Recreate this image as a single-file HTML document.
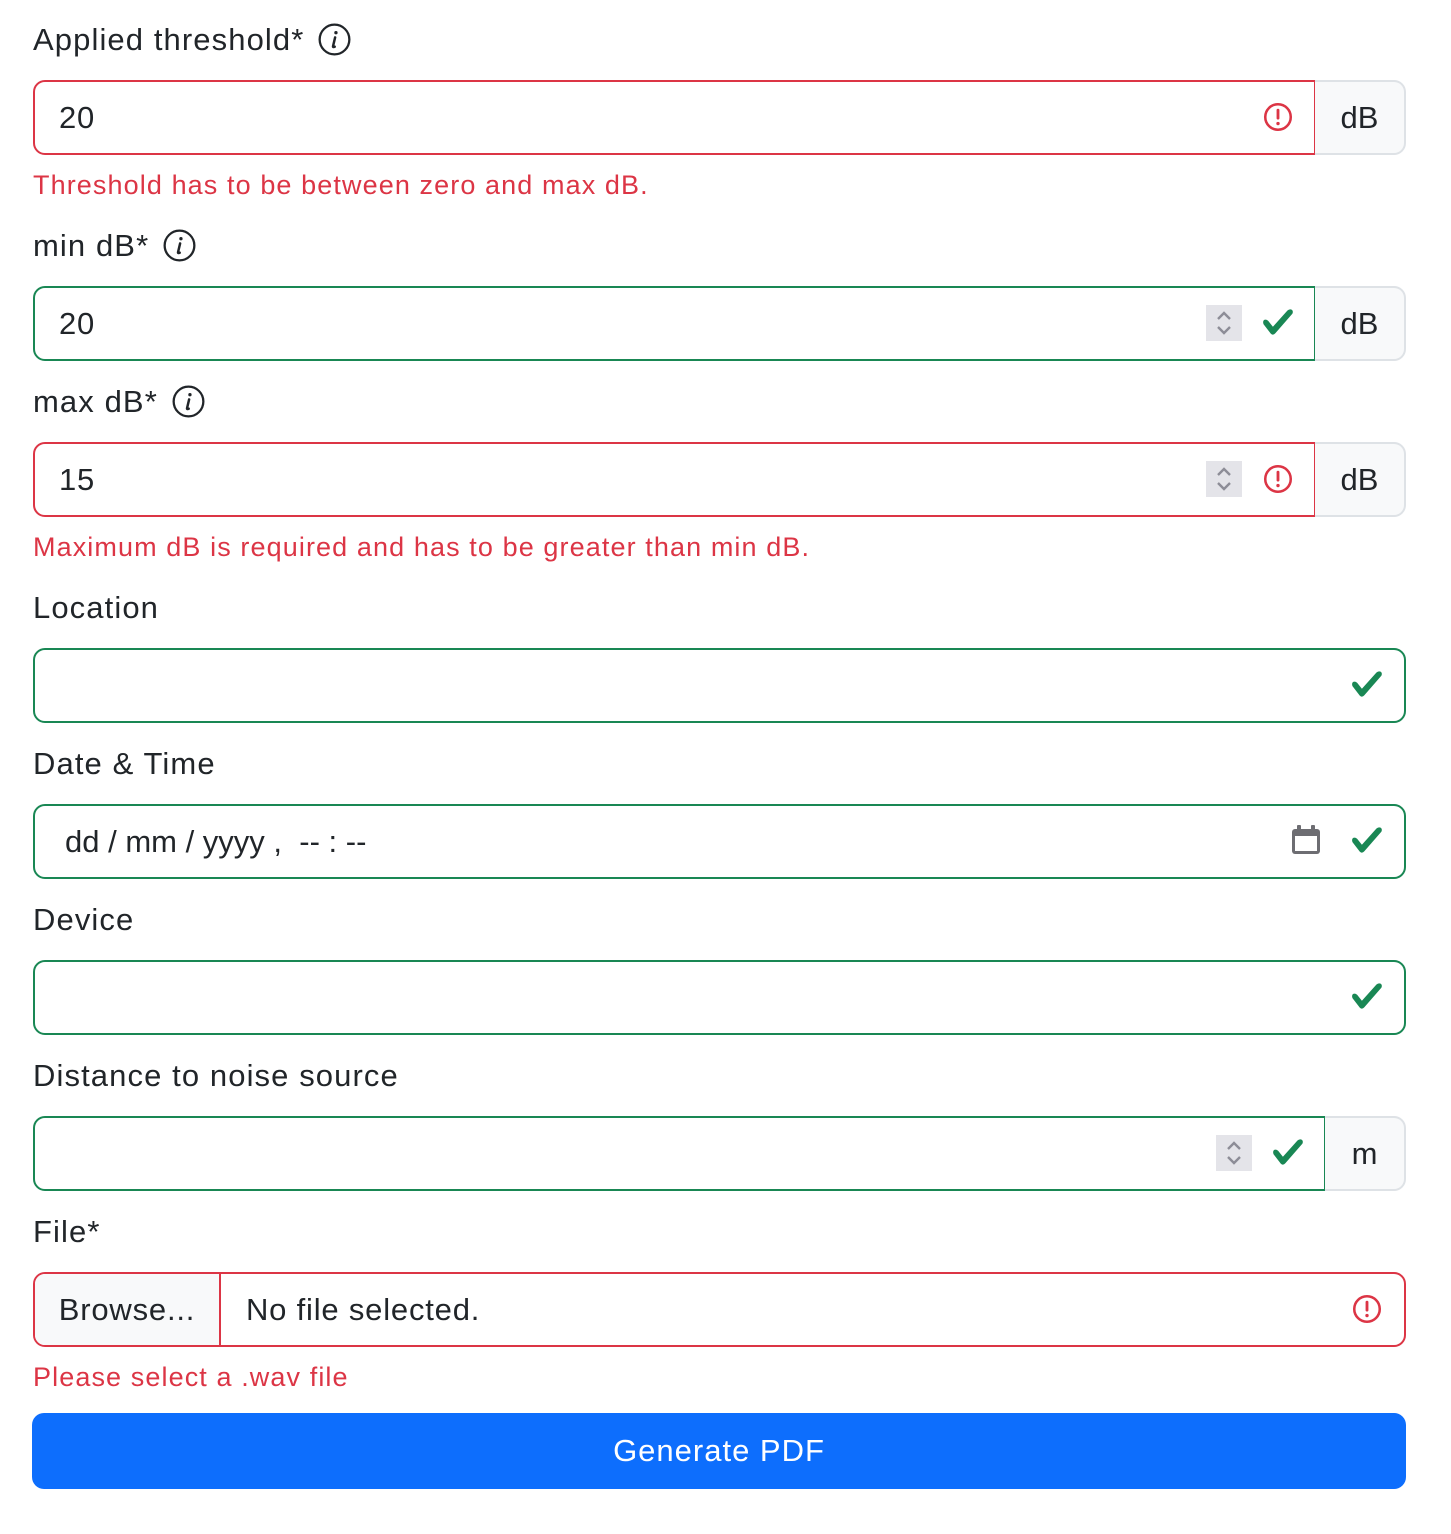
<!DOCTYPE html>
<html><head><meta charset="utf-8"><style>
body{margin:0;width:1451px;height:1534px;background:#fff;font-family:"Liberation Sans","DejaVu Sans",sans-serif;color:#212529;position:relative;overflow:hidden}
.a{position:absolute}
.lbl{position:absolute;left:33px;font-size:31px;line-height:40px;white-space:nowrap;letter-spacing:1.1px}
.lbl svg{vertical-align:-6px;margin-left:14px}
.err{position:absolute;left:33px;font-size:27px;color:#dc3545;line-height:36px;white-space:nowrap;letter-spacing:1.1px}
.inp{position:absolute;left:33px;height:75px;box-sizing:border-box;border:2px solid;border-radius:12px;font-size:31px;line-height:71px;padding-left:24px;letter-spacing:0.8px}
.r{border-color:#dc3545}.g{border-color:#198754}
.grp{border-top-right-radius:0;border-bottom-right-radius:0}
.add{position:absolute;height:75px;box-sizing:border-box;border:2px solid #dee2e6;border-left:none;background:#f8f9fa;border-radius:0 12px 12px 0;font-size:31px;line-height:71px;text-align:center}
.spin{position:absolute;width:36px;height:36px;background:#e4e4e9}
.ic{position:absolute;width:34px;height:34px}
</style></head><body>
<svg width="0" height="0" style="position:absolute"><defs>
<symbol id="chk" viewBox="0 0 8 8"><path fill="#198754" d="M2.3 6.730.6 4.53c-.4-1.04.46-1.4 1.1-.8l1.1 1.4 3.4-3.8c.6-.63 1.6-.27 1.2.7l-4 4.6c-.43.5-.8.4-1.1.1z"/></symbol>
<symbol id="bad" viewBox="0 0 12 12"><circle cx="6" cy="6" r="4.5" fill="none" stroke="#dc3545" stroke-width="0.9"/><path stroke="#dc3545" stroke-width="1" stroke-linecap="round" d="M6 3.6v2.8"/><circle cx="6" cy="8.3" r=".6" fill="#dc3545"/></symbol>
<symbol id="inf" viewBox="0 0 16 16"><circle cx="8" cy="8" r="7.2" fill="none" stroke="#212529" stroke-width="1.1"/><path fill="none" stroke="#212529" stroke-width="1.2" stroke-linecap="round" d="M8.3 7 7.3 11.2c-.1.5.3.6.8.3"/><circle cx="8.7" cy="4.7" r=".8" fill="#212529"/></symbol>
<symbol id="sp" viewBox="0 0 36 36"><path fill="none" stroke="#8d8d97" stroke-width="2.4" d="M12 14l6-6 6 6M12 22l6 6 6-6"/></symbol>
</defs></svg>

<div class="lbl" style="top:20px">Applied threshold*<svg width="33" height="33"><use href="#inf"/></svg></div>
<div class="inp r grp" style="top:80px;width:1283px">20</div>
<svg class="ic" style="left:1261px;top:100px"><use href="#bad"/></svg>
<div class="add" style="left:1315px;top:80px;width:91px">dB</div>
<div class="err" style="top:167px">Threshold has to be between zero and max dB.</div>

<div class="lbl" style="top:226px">min dB*<svg width="33" height="33"><use href="#inf"/></svg></div>
<div class="inp g grp" style="top:286px;width:1283px">20</div>
<svg class="spin" style="left:1206px;top:305px"><use href="#sp"/></svg>
<svg class="ic" style="left:1261px;top:305px"><use href="#chk"/></svg>
<div class="add" style="left:1315px;top:286px;width:91px">dB</div>

<div class="lbl" style="top:382px">max dB*<svg width="33" height="33"><use href="#inf"/></svg></div>
<div class="inp r grp" style="top:442px;width:1283px">15</div>
<svg class="spin" style="left:1206px;top:461px"><use href="#sp"/></svg>
<svg class="ic" style="left:1261px;top:462px"><use href="#bad"/></svg>
<div class="add" style="left:1315px;top:442px;width:91px">dB</div>
<div class="err" style="top:529px">Maximum dB is required and has to be greater than min dB.</div>

<div class="lbl" style="top:588px">Location</div>
<div class="inp g" style="top:648px;width:1373px"></div>
<svg class="ic" style="left:1350px;top:667px"><use href="#chk"/></svg>

<div class="lbl" style="top:744px">Date &amp; Time</div>
<div class="inp g" style="top:804px;width:1373px;padding-left:30px;letter-spacing:0">dd / mm / yyyy ,&nbsp; -- : --</div>
<svg class="a" style="left:1289px;top:823px" width="34" height="34" viewBox="0 0 34 34"><rect x="3" y="6" width="28" height="25" rx="3" fill="#6d6d72"/><rect x="6" y="13" width="22" height="15" fill="#fff"/><rect x="8" y="2" width="4" height="7" rx="1" fill="#6d6d72"/><rect x="22" y="2" width="4" height="7" rx="1" fill="#6d6d72"/></svg>
<svg class="ic" style="left:1350px;top:823px"><use href="#chk"/></svg>

<div class="lbl" style="top:900px">Device</div>
<div class="inp g" style="top:960px;width:1373px"></div>
<svg class="ic" style="left:1350px;top:979px"><use href="#chk"/></svg>

<div class="lbl" style="top:1056px">Distance to noise source</div>
<div class="inp g grp" style="top:1116px;width:1293px"></div>
<svg class="spin" style="left:1216px;top:1135px"><use href="#sp"/></svg>
<svg class="ic" style="left:1271px;top:1135px"><use href="#chk"/></svg>
<div class="add" style="left:1325px;top:1116px;width:81px">m</div>

<div class="lbl" style="top:1212px">File*</div>
<div class="inp r" style="top:1272px;width:1373px;padding-left:0;overflow:hidden">
<span style="display:inline-block;width:184px;height:71px;background:#f8f9fa;border-right:2px solid #dc3545;text-align:center;vertical-align:top">Browse...</span><span style="padding-left:25px">No file selected.</span></div>
<svg class="ic" style="left:1350px;top:1292px"><use href="#bad"/></svg>
<div class="err" style="top:1359px">Please select a .wav file</div>

<div class="a" style="left:32px;top:1413px;width:1374px;height:76px;background:#0d6efd;border-radius:12px;color:#fff;font-size:31px;line-height:76px;text-align:center;letter-spacing:1px">Generate PDF</div>
</body></html>
